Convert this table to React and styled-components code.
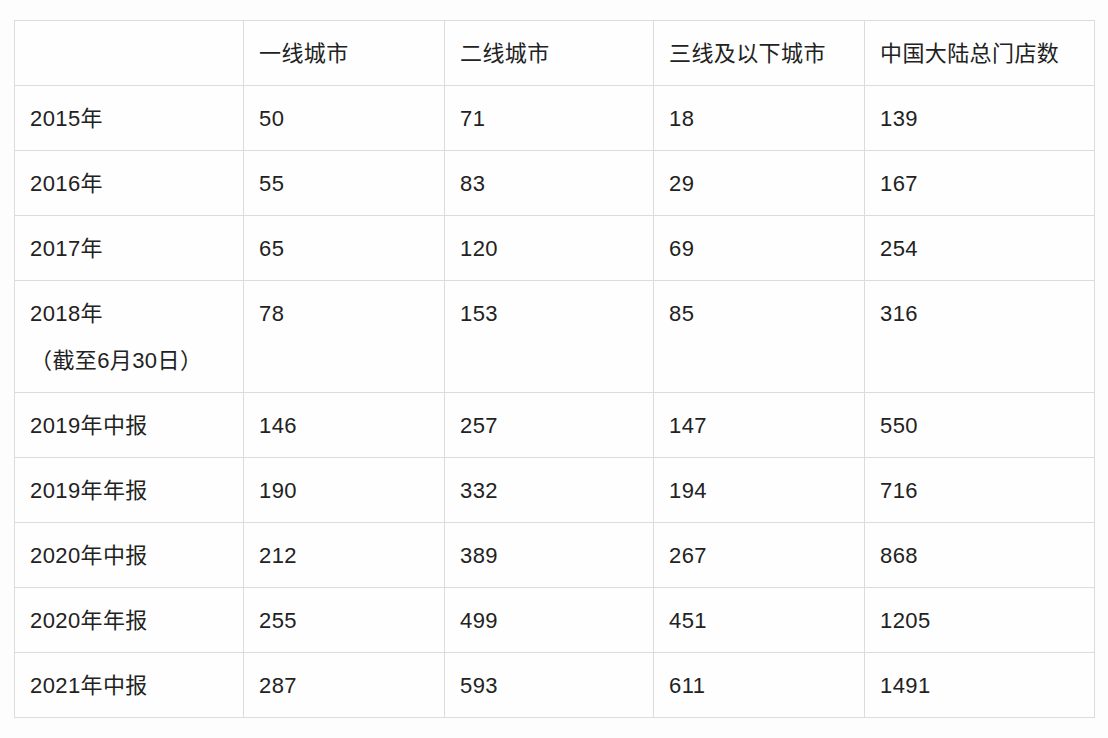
import styled, { createGlobalStyle } from "styled-components";

const GlobalStyle = createGlobalStyle`
  html, body {
    margin: 0;
    padding: 0;
    background: #fdfdfd;
  }
  body {
    font-family: "Liberation Sans", "Noto Sans CJK SC", sans-serif;
  }
`;

const headers = ["", "一线城市", "二线城市", "三线及以下城市", "中国大陆总门店数"];

const rows = [
  [["2015年"], 50, 71, 18, 139],
  [["2016年"], 55, 83, 29, 167],
  [["2017年"], 65, 120, 69, 254],
  [["2018年", "（截至6月30日）"], 78, 153, 85, 316],
  [["2019年中报"], 146, 257, 147, 550],
  [["2019年年报"], 190, 332, 194, 716],
  [["2020年中报"], 212, 389, 267, 868],
  [["2020年年报"], 255, 499, 451, 1205],
  [["2021年中报"], 287, 593, 611, 1491],
];

const widths = [229, 201, 209, 211, 230];

function App() {
  return (
    <>
      <GlobalStyle />
      <Page>
        <StTable>
          <colgroup>
            {widths.map((w, i) => (
              <col key={i} style={{ width: w }} />
            ))}
          </colgroup>
          <thead>
            <tr>
              {headers.map((h, i) => (
                <StCell as="th" key={i}>
                  {h}
                </StCell>
              ))}
            </tr>
          </thead>
          <tbody>
            {rows.map((row) => (
              <tr key={row[0][0]}>
                <StCell>
                  {row[0].map((line) => (
                    <StLine key={line}>{line}</StLine>
                  ))}
                </StCell>
                {row.slice(1).map((v, i) => (
                  <StCell key={i}>{v}</StCell>
                ))}
              </tr>
            ))}
          </tbody>
        </StTable>
      </Page>
    </>
  );
}

const Page = styled.div`
  padding: 20px 14px 18px 14px;
`;

const StTable = styled.table`
  border-collapse: collapse;
  table-layout: fixed;
  width: 1080px;
  background: #fefefe;
`;

const StCell = styled.td`
  border: 1px solid #dcdcdc;
  padding: 9px 15px 8px 15px;
  line-height: 47px;
  font-size: 22px;
  letter-spacing: 0.4px;
  font-weight: normal;
  color: #222;
  text-align: left;
  vertical-align: top;
  white-space: nowrap;
`;

const StLine = styled.div`
  line-height: 47px;
`;

export default App;
